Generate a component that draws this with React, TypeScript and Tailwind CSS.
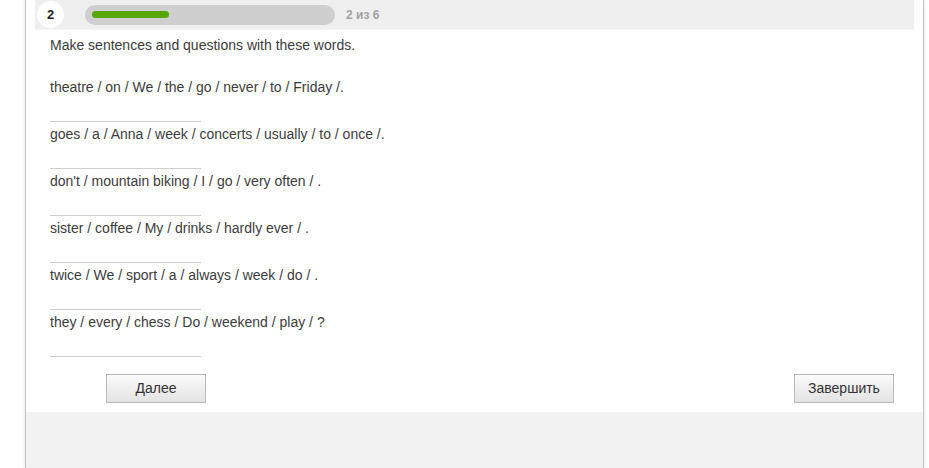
import React from "react";

const sentences = [
  "theatre / on / We / the / go / never / to / Friday /.",
  "goes / a / Anna / week / concerts / usually / to / once /.",
  "don't / mountain biking / I / go / very often / .",
  "sister / coffee / My / drinks / hardly ever / .",
  "twice / We / sport / a / always / week / do / .",
  "they / every / chess / Do / weekend / play / ?",
];

export default function App() {
  return (
    <div
      className="w-[929px] h-[468px] bg-white overflow-hidden"
      style={{ fontFamily: '"Liberation Sans", Arial, sans-serif' }}
    >
      <div className="ml-[25px] w-[899px] h-[468px] border-x border-[#c4c4c4] shadow-[0_0_4px_rgba(0,0,0,0.12)] flex flex-col">
        <div className="bg-white px-[9px]">
          {/* header */}
          <div className="h-[29px] bg-[#efefef] flex items-center shadow-[0_1px_1px_rgba(0,0,0,0.04)]">
            <div className="ml-[2px] w-[27px] h-[27px] rounded-full bg-white flex items-center justify-center text-[13px] font-bold text-[#222]">
              2
            </div>
            <div className="ml-[21px] w-[250px] h-[20px] rounded-full bg-[#cfcfcf] flex items-center px-[7px]">
              <div className="w-[77px] h-[7px] rounded-full bg-[#56a800]" />
            </div>
            <div className="ml-[11px] text-[12px] font-bold text-[#a3a3a3]">2 из 6</div>
          </div>
          {/* body */}
          <div className="px-[15px] pt-[6px] text-[14px] text-[#3c3c3c]">
            <div className="leading-[20px]">Make sentences and questions with these words.</div>
            <div className="mt-[22px]">
              {sentences.map((s, i) => (
                <div key={i} className="h-[47px]">
                  <div className="leading-[20px]">{s}</div>
                  <div className="w-[151px] h-[25px] border-b border-[#cfcfcf]" />
                </div>
              ))}
            </div>
          </div>
          <div className="flex justify-between pl-[71px] pr-[20px] pt-[15px] pb-[9px]">
            <button className="w-[100px] h-[29px] border border-[#b9b9b9] bg-gradient-to-b from-[#fbfbfb] to-[#e3e3e3] text-[14px] text-[#333]">
              Далее
            </button>
            <button className="w-[100px] h-[29px] border border-[#b9b9b9] bg-gradient-to-b from-[#fbfbfb] to-[#e3e3e3] text-[14px] text-[#333]">
              Завершить
            </button>
          </div>
        </div>
        <div className="flex-1 bg-[#f2f2f2]" />
      </div>
    </div>
  );
}
